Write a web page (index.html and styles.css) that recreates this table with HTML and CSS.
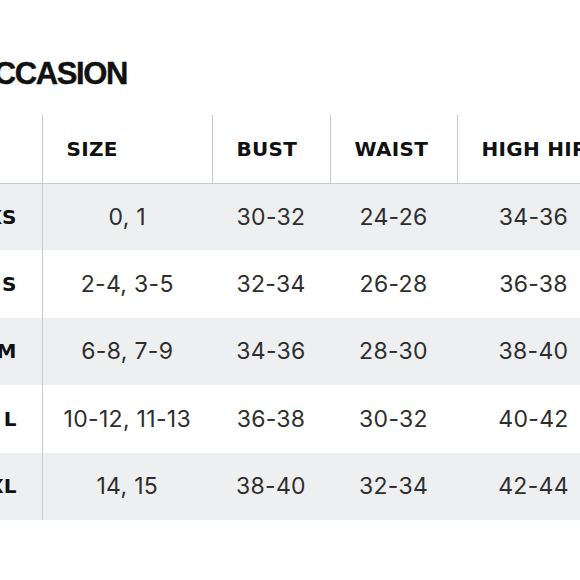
FILE: index.html
```html
<!DOCTYPE html>
<html lang="en">
<head>
<meta charset="utf-8">
<title>Size chart by occasion</title>
<link rel="stylesheet" href="styles.css">
</head>
<body>
<div class="page">
  <div class="title-row">
    <h2 class="title">OCCASION</h2>
  </div>
  <table class="chart">
    <thead>
      <tr>
        <th class="label-col"></th>
        <th class="c-size">SIZE</th>
        <th class="c-bust">BUST</th>
        <th class="c-waist">WAIST</th>
        <th class="c-hip">HIGH HIP</th>
      </tr>
    </thead>
    <tbody>
      <tr class="shade"><th class="label-col">XS</th><td>0, 1</td><td>30-32</td><td>24-26</td><td>34-36</td></tr>
      <tr><th class="label-col">S</th><td>2-4, 3-5</td><td>32-34</td><td>26-28</td><td>36-38</td></tr>
      <tr class="shade"><th class="label-col">M</th><td>6-8, 7-9</td><td>34-36</td><td>28-30</td><td>38-40</td></tr>
      <tr><th class="label-col">L</th><td>10-12, 11-13</td><td>36-38</td><td>30-32</td><td>40-42</td></tr>
      <tr class="shade"><th class="label-col">XL</th><td>14, 15</td><td>38-40</td><td>32-34</td><td>42-44</td></tr>
    </tbody>
  </table>
</div>
</body>
</html>
```

FILE: styles.css
```css
html, body {
  margin: 0;
  padding: 0;
  background: #ffffff;
  overflow: hidden;
}

.page {
  width: 580px;
  height: 580px;
  overflow: hidden;
  padding-top: 56px;
  box-sizing: border-box;
}

.title-row {
  display: flex;
  justify-content: flex-end;
  width: 127px;
  height: 36px;
  align-items: center;
}

.title {
  margin: 0;
  white-space: nowrap;
  font-family: "Liberation Sans", Arial, sans-serif;
  font-weight: 700;
  font-size: 31px;
  line-height: 36px;
  letter-spacing: -1.4px;
  -webkit-text-stroke: 0.4px #111111;
  color: #111111;
}

.chart {
  margin-top: 23px;
  margin-left: -38px;
  border-collapse: collapse;
  table-layout: fixed;
  width: 648px;
}

.chart th,
.chart td {
  padding: 0;
  height: 67.4px;
  box-sizing: border-box;
}

.chart thead th {
  height: 68px;
  text-align: left;
  padding-left: 24px;
  font-family: "DejaVu Sans", sans-serif;
  font-weight: 700;
  font-size: 20px;
  letter-spacing: 0.3px;
  color: #111111;
  border-left: 1px solid #c9c9c9;
  border-bottom: 1px solid #c9c9c9;
}

.chart thead th.label-col {
  border-left: none;
}

.chart .label-col {
  width: 80px;
  text-align: right;
  padding-left: 0;
  padding-right: 25px;
  border-right: 1px solid #c9c9c9;
  font-family: "DejaVu Sans", sans-serif;
  font-weight: 700;
  font-size: 20px;
  color: #111111;
}

.chart .c-size { width: 170px; }
.chart .c-bust { width: 118px; }
.chart .c-waist { width: 127px; }
.chart .c-hip { width: 153px; }

.chart td {
  text-align: center;
  font-family: "Inter", "Open Sans", sans-serif;
  font-weight: 400;
  font-size: 23px;
  letter-spacing: 0.3px;
  color: #2e2e2e;
}

.chart tr.shade th,
.chart tr.shade td {
  background: #eeeff1;
}
```
